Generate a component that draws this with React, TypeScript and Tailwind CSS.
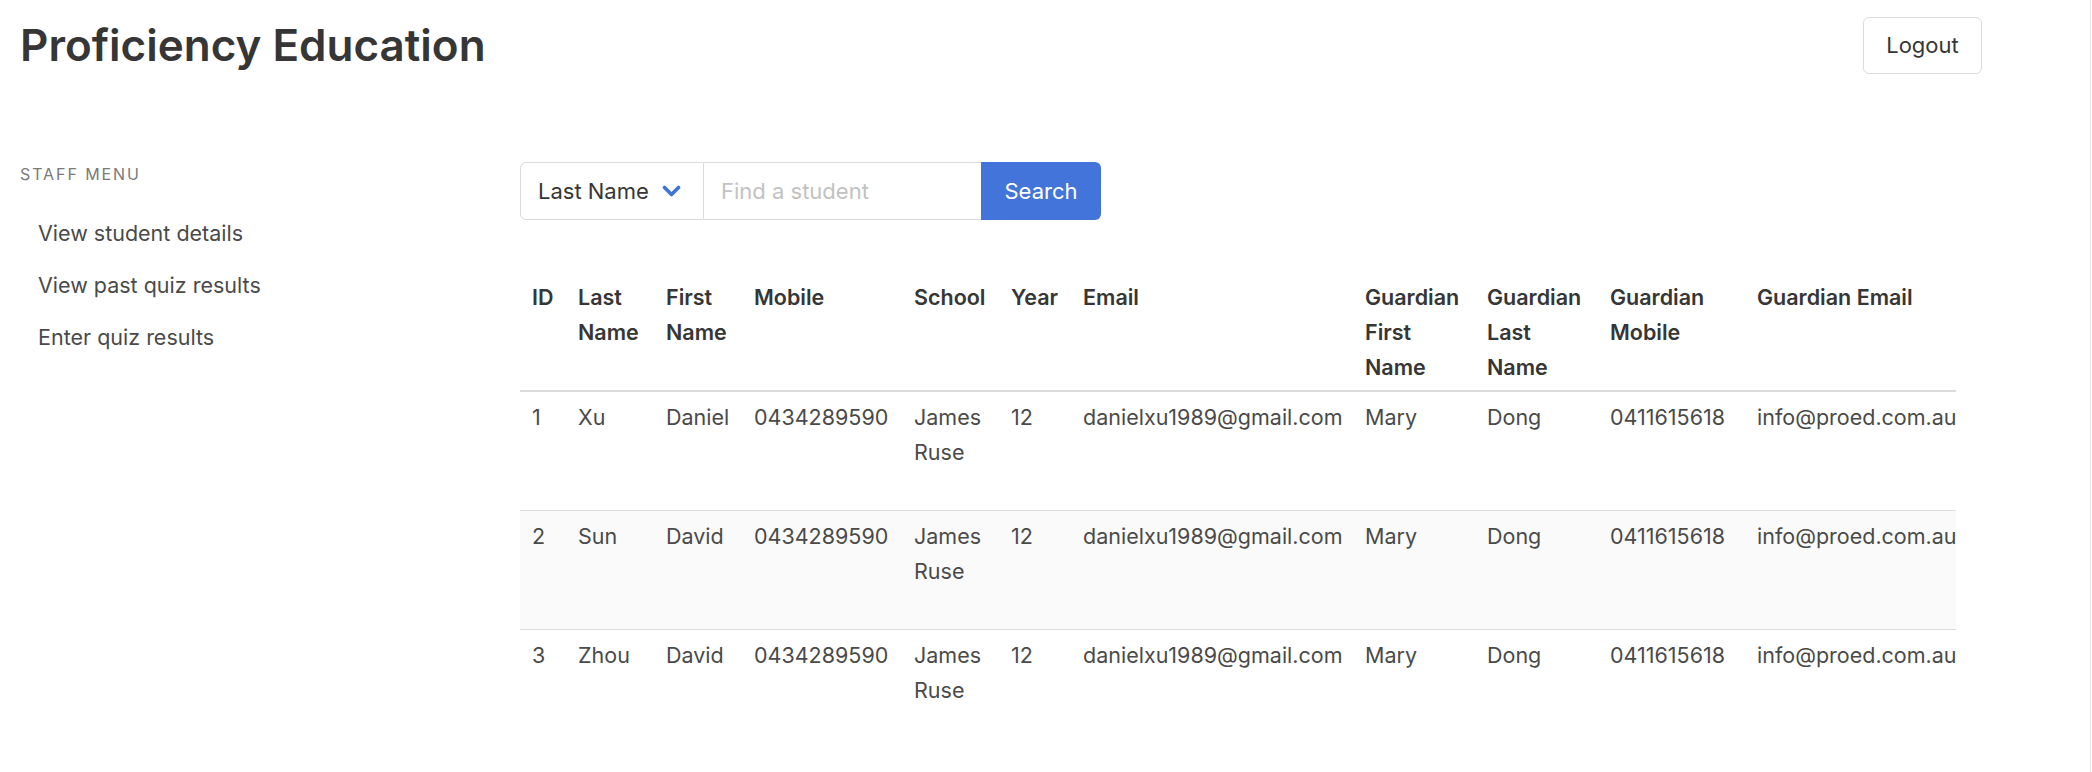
const students = [
  { id: 1, last: "Xu", first: "Daniel" },
  { id: 2, last: "Sun", first: "David" },
  { id: 3, last: "Zhou", first: "David" },
];

const cols = [46, 88, 88, 160, 97, 72, 282, 122, 123, 147, 211];

export default function App() {
  return (
    <div className="min-h-screen mr-px border-r border-[#e6e6e6] bg-white text-[#4a4a4a] font-['Inter',sans-serif]">
      <header className="flex items-start justify-between pl-5 pr-[108px] pt-[17px] h-[162px]">
        <h1 className="mt-[3px] text-[44px] leading-[50px] font-semibold text-[#363636]">Proficiency Education</h1>
        <button className="h-[57px] w-[119px] rounded-[6px] border border-[#dbdbdb] bg-white text-[22px] text-[#363636]">
          Logout
        </button>
      </header>

      <div className="flex">
        <aside className="w-[520px] shrink-0 pl-5">
          <p className="text-[16px] leading-6 uppercase tracking-[0.12em] text-[#7a7a7a]">Staff menu</p>
          <ul className="mt-[21px] text-[21.5px]">
            <li className="h-[52px] flex items-center pl-[18px]">View student details</li>
            <li className="h-[52px] flex items-center pl-[18px]">View past quiz results</li>
            <li className="h-[52px] flex items-center pl-[18px]">Enter quiz results</li>
          </ul>
        </aside>

        <main className="flex-1">
          <div className="flex h-[58px] text-[22px]">
            <div className="w-[184px] flex items-center justify-between pl-[17px] pr-[22px] border border-[#dbdbdb] rounded-l-[6px] text-[#363636]">
              <span>Last Name</span>
              <svg width="19" height="13" viewBox="0 0 19 13" fill="none">
                <path d="M2.5 2.5 L9.5 9.5 L16.5 2.5" stroke="#3e73d7" strokeWidth="3.6" strokeLinecap="round" strokeLinejoin="round" />
              </svg>
            </div>
            <div className="w-[277px] flex items-center px-[17px] border-y border-[#dbdbdb] text-[#c2c2c2]">
              Find a student
            </div>
            <button className="w-[120px] rounded-r-[6px] bg-[#4274d9] text-white">Search</button>
          </div>

          <table className="mt-[49px] w-[1436px] table-fixed text-left text-[21.5px] leading-[35px]">
            <colgroup>
              {cols.map((w, i) => (
                <col key={i} style={{ width: w }} />
              ))}
            </colgroup>
            <thead>
              <tr className="border-b-2 border-[#dbdbdb] text-[#363636]">
                <th className="px-3 pt-[11px] pb-[5px] align-top font-semibold">ID</th>
                <th className="px-3 pt-[11px] pb-[5px] align-top font-semibold">Last Name</th>
                <th className="px-3 pt-[11px] pb-[5px] align-top font-semibold">First Name</th>
                <th className="px-3 pt-[11px] pb-[5px] align-top font-semibold">Mobile</th>
                <th className="px-3 pt-[11px] pb-[5px] align-top font-semibold">School</th>
                <th className="px-3 pt-[11px] pb-[5px] align-top font-semibold">Year</th>
                <th className="px-3 pt-[11px] pb-[5px] align-top font-semibold">Email</th>
                <th className="px-3 pt-[11px] pb-[5px] align-top font-semibold">Guardian First Name</th>
                <th className="px-3 pt-[11px] pb-[5px] align-top font-semibold">Guardian Last Name</th>
                <th className="px-3 pt-[11px] pb-[5px] align-top font-semibold">Guardian Mobile</th>
                <th className="px-3 pt-[11px] pb-[5px] align-top font-semibold whitespace-nowrap">Guardian Email</th>
              </tr>
            </thead>
            <tbody>
              {students.map((s) => (
                <tr
                  key={s.id}
                  className={(s.id === 3 ? "" : "border-b border-[#dbdbdb] ") + (s.id === 2 ? "bg-[#fafafa]" : "")}
                >
                  <td className="px-3 pt-2 pb-[40px] align-top">{s.id}</td>
                  <td className="px-3 pt-2 pb-[40px] align-top">{s.last}</td>
                  <td className="px-3 pt-2 pb-[40px] align-top">{s.first}</td>
                  <td className="px-3 pt-2 pb-[40px] align-top whitespace-nowrap">0434289590</td>
                  <td className="px-3 pt-2 pb-[40px] align-top">James Ruse</td>
                  <td className="px-3 pt-2 pb-[40px] align-top">12</td>
                  <td className="px-3 pt-2 pb-[40px] align-top whitespace-nowrap">danielxu1989@gmail.com</td>
                  <td className="px-3 pt-2 pb-[40px] align-top">Mary</td>
                  <td className="px-3 pt-2 pb-[40px] align-top">Dong</td>
                  <td className="px-3 pt-2 pb-[40px] align-top whitespace-nowrap">0411615618</td>
                  <td className="px-3 pt-2 pb-[40px] align-top whitespace-nowrap">info@proed.com.au</td>
                </tr>
              ))}
            </tbody>
          </table>
        </main>
      </div>
    </div>
  );
}
